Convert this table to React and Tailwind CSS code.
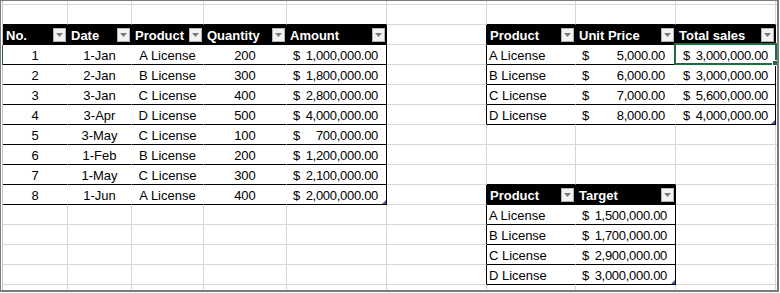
import React from "react";

const COL_W = ["w-[65px]", "w-[64px]", "w-[72px]", "w-[83px]", "w-[100px]", "w-[100px]", "w-[89px]", "w-[100px]", "w-[100px]"];

const TABLES = [
  { c0: 0, c1: 4, r0: 1, r1: 9 },
  { c0: 6, c1: 8, r0: 1, r1: 5 },
  { c0: 6, c1: 7, r0: 9, r1: 13 },
];

const sales = [
  [1, "1-Jan", "A License", 200, "1,000,000.00"],
  [2, "2-Jan", "B License", 300, "1,800,000.00"],
  [3, "3-Jan", "C License", 400, "2,800,000.00"],
  [4, "3-Apr", "D License", 500, "4,000,000.00"],
  [5, "3-May", "C License", 100, "700,000.00"],
  [6, "1-Feb", "B License", 200, "1,200,000.00"],
  [7, "1-May", "C License", 300, "2,100,000.00"],
  [8, "1-Jun", "A License", 400, "2,000,000.00"],
];

const prices = [
  ["A License", "5,000.00", "3,000,000.00"],
  ["B License", "6,000.00", "3,000,000.00"],
  ["C License", "7,000.00", "5,600,000.00"],
  ["D License", "8,000.00", "4,000,000.00"],
];

const targets = [
  ["A License", "1,500,000.00"],
  ["B License", "1,700,000.00"],
  ["C License", "2,900,000.00"],
  ["D License", "3,000,000.00"],
];

const RIGHT = { grid: "border-r-[#d6d6d6]", black: "border-r-black", white: "border-r-white" };
const BOTTOM = { grid: "border-b-[#d6d6d6]", black: "border-b-black" };

const tableAt = (r, c) => TABLES.find((t) => r >= t.r0 && r <= t.r1 && c >= t.c0 && c <= t.c1);

const FilterButton = () => (
  <span className="mr-[1px] flex h-[14px] w-[13px] shrink-0 items-center justify-center border border-[#b4b4b4] bg-[#f2f2f2]">
    <svg width="7" height="4" viewBox="0 0 7 4">
      <path d="M0 0h7L3.5 4z" fill="#7a7a7a" />
    </svg>
  </span>
);

const Header = ({ label }) => (
  <div className="flex h-full w-full items-center justify-between bg-black pl-[3px] font-bold text-white">
    <span className="pt-[2px]">{label}</span>
    <FilterButton />
  </div>
);

const Money = ({ value, className }) => (
  <div className={`flex w-full justify-between pt-[2px] tracking-[-0.3px] ${className}`}>
    <span>$</span>
    <span>{value}</span>
  </div>
);

const Center = ({ children }) => <div className="w-full pt-[2px] text-center">{children}</div>;
const Left = ({ children }) => <div className="w-full pl-[2px] pt-[2px]">{children}</div>;

const ResizeMark = () => (
  <svg className="absolute bottom-0 right-0" width="4" height="4" viewBox="0 0 4 4">
    <path d="M4 0v4H0z" fill="#4659a6" />
  </svg>
);

function content(r, c) {
  // sales table
  if (r === 1 && c <= 4) return <Header label={["No.", "Date", "Product", "Quantity", "Amount"][c]} />;
  if (r >= 2 && r <= 9 && c <= 4) {
    const row = sales[r - 2];
    if (c === 4) return <Money value={row[4]} className="pl-[6px] pr-[8px]" />;
    return <Center>{row[c]}</Center>;
  }
  // price table
  if (r === 1 && c >= 6) return <Header label={["Product", "Unit Price", "Total sales"][c - 6]} />;
  if (r >= 2 && r <= 5 && c >= 6) {
    const row = prices[r - 2];
    if (c === 6) return <Left>{row[0]}</Left>;
    if (c === 7) return <Money value={row[1]} className="pl-[6px] pr-[10px]" />;
    return <Money value={row[2]} className="pl-[7px] pr-[7px]" />;
  }
  // target table
  if (r === 9 && (c === 6 || c === 7)) return <Header label={c === 6 ? "Product" : "Target"} />;
  if (r >= 10 && r <= 13 && (c === 6 || c === 7)) {
    const row = targets[r - 10];
    if (c === 6) return <Left>{row[0]}</Left>;
    return <Money value={row[1]} className="pl-[6px] pr-[8px]" />;
  }
  return null;
}

function Cell({ r, c }) {
  const t = tableAt(r, c);
  let right = "grid";
  let bottom = "grid";
  if (t) {
    right = c === t.c1 || r === t.r0 ? "black" : "white";
    bottom = "black";
  } else {
    if (tableAt(r, c + 1)) right = "black";
    if (tableAt(r + 1, c)) bottom = "black";
  }
  const isCorner = TABLES.some((tb) => tb.r1 === r && tb.c1 === c);
  const selected = r === 2 && c === 8;
  return (
    <div className={`relative flex h-full shrink-0 items-center border-r border-b ${COL_W[c]} ${RIGHT[right]} ${BOTTOM[bottom]}`}>
      {content(r, c)}
      {isCorner && <ResizeMark />}
      {selected && (
        <div className="absolute -left-[2px] -top-[2px] -right-[2px] -bottom-[1px] z-10 border-2 border-[#1e6b41]">
          <span className="absolute -bottom-[3px] -right-[3px] h-[6px] w-[6px] border border-white bg-[#1e6b41]" />
        </div>
      )}
    </div>
  );
}

export default function App() {
  const rows = Array.from({ length: 14 }, (_, i) => i);
  return (
    <div className="h-[293px] w-[780px] bg-white">
      <div className="flex h-[292px] w-[779px] flex-col overflow-hidden border-t border-l border-r-2 border-b-2 border-[#7b7b7b] bg-white font-['Liberation_Sans',Arial,sans-serif] text-[13px] leading-none text-black">
        {/* partial row above */}
        <div className="flex h-[4px] shrink-0">
          <div className="h-full w-[2px] shrink-0 border-r border-[#c6c6c6]" />
          {COL_W.map((w, c) => (
            <div key={c} className={`h-full shrink-0 border-r border-b border-[#d6d6d6] ${w}`} />
          ))}
          <div className="h-full flex-1 border-b border-[#d6d6d6]" />
        </div>
        {rows.map((r) => (
          <div key={r} className="flex h-[20px] shrink-0">
            <div className={`h-full w-[2px] shrink-0 border-r ${r === 2 ? "border-[#1e6b41]" : "border-[#c6c6c6]"}`} />
            {COL_W.map((_, c) => (
              <Cell key={c} r={r} c={c} />
            ))}
            <div className="h-full flex-1 border-b border-[#d6d6d6]" />
          </div>
        ))}
        {/* partial row below */}
        <div className="flex flex-1">
          <div className="h-full w-[2px] shrink-0 border-r border-[#c6c6c6]" />
          {COL_W.map((w, c) => (
            <div key={c} className={`h-full shrink-0 border-r border-[#d6d6d6] ${w}`} />
          ))}
          <div className="h-full flex-1" />
        </div>
      </div>
    </div>
  );
}
